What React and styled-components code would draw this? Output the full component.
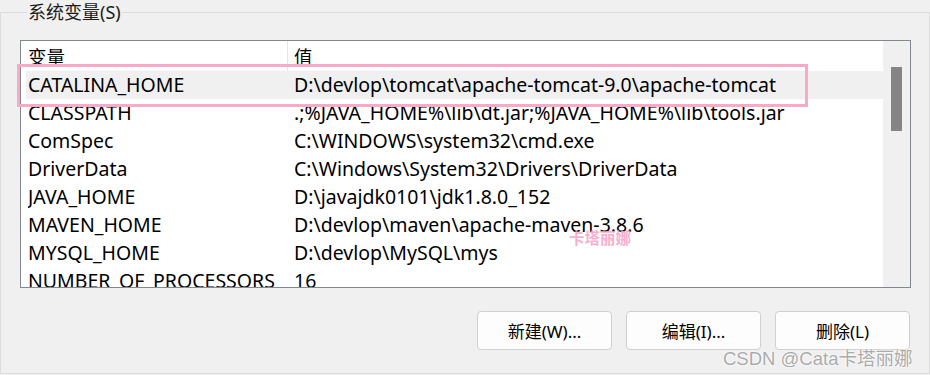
import React from 'react'
import styled, { createGlobalStyle } from 'styled-components'

const GlobalStyle = createGlobalStyle`
  html, body { margin: 0; padding: 0; background: #f0f0f0; }
  body { font-family: "Noto Sans", "Noto Sans CJK SC", sans-serif; color: #000; }
`

const Page = styled.div`
  position: relative;
  width: 930px;
  height: 375px;
  overflow: hidden;
  background: #f0f0f0;
`

const Group = styled.fieldset`
  box-sizing: border-box;
  margin: 0;
  width: 930px;
  height: 374px;
  border: 1px solid #dcdcdc;
  padding: 16px 19px 0 19px;
  min-width: 0;
`

const Legend = styled.legend`
  padding: 0 1px;
  margin-left: 7px;
  font-size: 18px;
  line-height: 24px;
  color: #1a1a1a;
`

const ListBox = styled.div`
  display: flex;
  width: 891px;
  height: 248px;
  box-sizing: border-box;
  border: 1px solid #828790;
  background: #fff;
  overflow: hidden;
`

const Table = styled.div`
  flex: 1;
  display: flex;
  flex-direction: column;
  overflow: hidden;
`

const Row = styled.div`
  display: grid;
  grid-template-columns: 266px 1fr;
  flex: 0 0 ${p => (p.$header ? 30 : 28)}px;
  align-items: center;
  margin-left: 5px;
  padding-left: 2px;
  font-size: 19.5px;
  line-height: 26px;
  white-space: nowrap;
  background: ${p => (p.$selected ? '#f0f0f0' : 'transparent')};
`

const HeadCell = styled.div`
  position: relative;
  height: 100%;
  display: flex;
  align-items: center;
  padding-top: 1px;
  box-sizing: border-box;
  font-size: 18.5px;
  &:first-child::after {
    content: '';
    position: absolute;
    right: 6px;
    top: 0;
    bottom: 0;
    width: 1px;
    background: #e5e5e5;
  }
`

const Cell = styled.div`
  overflow: hidden;
  margin-top: -1px;
`

const Track = styled.div`
  position: relative;
  flex: 0 0 27px;
  background: #f0f0f0;
`

const Thumb = styled.div`
  position: absolute;
  left: 8px;
  top: 26px;
  width: 11px;
  height: 64px;
  background: #858585;
`

const Buttons = styled.div`
  display: flex;
  justify-content: flex-end;
  gap: 14px;
  margin-top: 23px;
  width: 890px;
`

const Button = styled.button`
  width: 135px;
  height: 39px;
  box-sizing: border-box;
  border: 1px solid #d0d0d0;
  border-radius: 4px;
  background: #fdfdfd;
  font-family: "Noto Sans", "Noto Sans CJK SC", sans-serif;
  font-size: 17px;
  color: #000;
  padding: 0;
`

const Highlight = styled.div`
  position: absolute;
  left: 17px;
  top: 64px;
  width: 791px;
  height: 43px;
  box-sizing: border-box;
  border: 3px solid #f9aac9;
  pointer-events: none;
`

const Stamp = styled.div`
  position: absolute;
  left: 569px;
  top: 226px;
  font-family: "Noto Sans CJK SC", sans-serif;
  font-weight: 700;
  font-size: 15.5px;
  color: rgba(248, 160, 196, 0.85);
`

const Credit = styled.div`
  position: absolute;
  left: 723px;
  top: 344px;
  font-family: "Liberation Sans", "Noto Sans CJK SC", sans-serif;
  font-size: 18.5px;
  color: rgba(160, 160, 160, 0.9);
  text-shadow: 0 0 2px #fff, 0 0 2px #fff;
  white-space: nowrap;
`

const vars = [
  ['CATALINA_HOME', 'D:\\devlop\\tomcat\\apache-tomcat-9.0\\apache-tomcat'],
  ['CLASSPATH', '.;%JAVA_HOME%\\lib\\dt.jar;%JAVA_HOME%\\lib\\tools.jar'],
  ['ComSpec', 'C:\\WINDOWS\\system32\\cmd.exe'],
  ['DriverData', 'C:\\Windows\\System32\\Drivers\\DriverData'],
  ['JAVA_HOME', 'D:\\javajdk0101\\jdk1.8.0_152'],
  ['MAVEN_HOME', 'D:\\devlop\\maven\\apache-maven-3.8.6'],
  ['MYSQL_HOME', 'D:\\devlop\\MySQL\\mys'],
  ['NUMBER_OF_PROCESSORS', '16'],
  ['OS', 'Windows_NT'],
]

const App = () => (
  <>
    <GlobalStyle />
    <Page>
      <Group>
        <Legend>系统变量(S)</Legend>
        <ListBox>
          <Table>
            <Row $header>
              <HeadCell>变量</HeadCell>
              <HeadCell>值</HeadCell>
            </Row>
            {vars.map(([name, value], i) => (
              <Row key={name} $selected={i === 0}>
                <Cell>{name}</Cell>
                <Cell>{value}</Cell>
              </Row>
            ))}
          </Table>
          <Track>
            <Thumb />
          </Track>
        </ListBox>
        <Buttons>
          <Button>新建(W)...</Button>
          <Button>编辑(I)...</Button>
          <Button>删除(L)</Button>
        </Buttons>
      </Group>
      <Highlight />
      <Stamp>卡塔丽娜</Stamp>
      <Credit>CSDN @Cata卡塔丽娜</Credit>
    </Page>
  </>
)

export default App
